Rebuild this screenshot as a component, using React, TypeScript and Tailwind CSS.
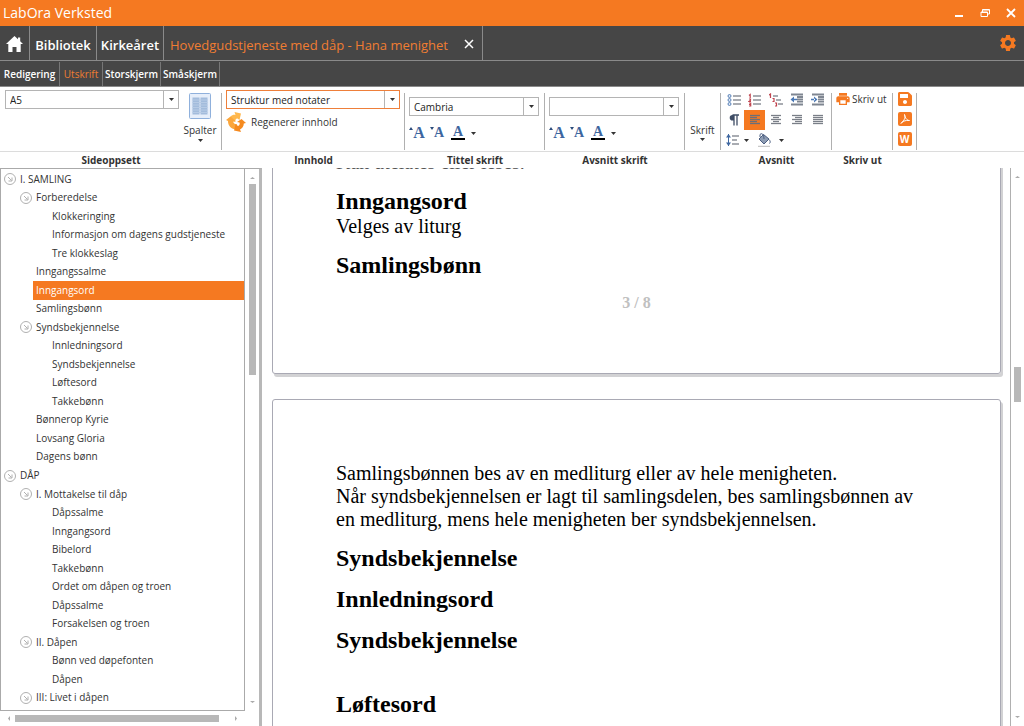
import { useState } from 'react';
import type { ReactNode } from 'react';
import { FaSave } from 'react-icons/fa';
import { MdPrint, MdSettings } from 'react-icons/md';

type TreeItem = { label: string; level: 0 | 1 | 2; open?: boolean };

const tree: TreeItem[] = [
    { label: 'I. SAMLING', level: 0, open: true },
    { label: 'Forberedelse', level: 1, open: true },
    { label: 'Klokkeringing', level: 2 },
    { label: 'Informasjon om dagens gudstjeneste', level: 2 },
    { label: 'Tre klokkeslag', level: 2 },
    { label: 'Inngangssalme', level: 1 },
    { label: 'Inngangsord', level: 1 },
    { label: 'Samlingsbønn', level: 1 },
    { label: 'Syndsbekjennelse', level: 1, open: true },
    { label: 'Innledningsord', level: 2 },
    { label: 'Syndsbekjennelse', level: 2 },
    { label: 'Løftesord', level: 2 },
    { label: 'Takkebønn', level: 2 },
    { label: 'Bønnerop Kyrie', level: 1 },
    { label: 'Lovsang Gloria', level: 1 },
    { label: 'Dagens bønn', level: 1 },
    { label: 'DÅP', level: 0, open: true },
    { label: 'I. Mottakelse til dåp', level: 1, open: true },
    { label: 'Dåpssalme', level: 2 },
    { label: 'Inngangsord', level: 2 },
    { label: 'Bibelord', level: 2 },
    { label: 'Takkebønn', level: 2 },
    { label: 'Ordet om dåpen og troen', level: 2 },
    { label: 'Dåpssalme', level: 2 },
    { label: 'Forsakelsen og troen', level: 2 },
    { label: 'II. Dåpen', level: 1, open: true },
    { label: 'Bønn ved døpefonten', level: 2 },
    { label: 'Dåpen', level: 2 },
    { label: 'III: Livet i dåpen', level: 1, open: true },
];

const indent = { 0: 'pl-[3px]', 1: 'pl-[19px]', 2: 'pl-[35px]' };

const ribbonColumns = 'grid grid-cols-[222px_183px_140px_140px_36px_111px_61px_24px_1fr]';

function Caret({ className = '' }: { className?: string }) {
    return (
        <svg viewBox="0 0 5 3" className={`h-[3px] w-[5px] shrink-0 ${className}`} aria-hidden="true">
            <path d="M0 0h5L2.500 3z" fill="#333" />
        </svg>
    );
}

function Combo({ label, options, active = false }: { label: string; options: string[]; active?: boolean }) {
    const border = active ? 'border-[#ee7f3a]' : 'border-[#b4b4b4]';
    return (
        <div className={`relative h-[19px] border bg-white ${border}`}>
            <select aria-label={label} className="block h-full w-full appearance-none pl-1 text-[10px] leading-4 text-[#222] outline-none">
                {options.map((o) => <option key={o}>{o}</option>)}
            </select>
            <span className="pointer-events-none absolute inset-y-0 right-0 flex w-[15px] items-center justify-center border-l border-[#b4b4b4]">
                <Caret />
            </span>
        </div>
    );
}

function Group({ children, className = '' }: { children?: ReactNode; className?: string }) {
    return <div className={`mt-1.5 mb-[3px] border-r border-[#b0b0b0] ${className}`}>{children}</div>;
}

function IconButton({ label, children, className = '' }: { label: string; children: ReactNode; className?: string }) {
    return (
        <button type="button" aria-label={label} title={label} className={`flex items-center justify-center ${className}`}>
            {children}
        </button>
    );
}

function FontTools({ name }: { name: string }) {
    return (
        <div className="mt-[7px] flex h-5 items-center font-['Liberation_Serif',serif] font-bold text-[#3d669f]">
            <IconButton label={`${name}: større skrift`} className="w-4 text-[16px] leading-4">
                <svg viewBox="0 0 4 4" className="mb-2 size-1 shrink-0"><path d="M0 3L2 0l2 3z" fill="#2b4c7c" /></svg>A
            </IconButton>
            <IconButton label={`${name}: mindre skrift`} className="ml-1 w-4 text-[14px] leading-4">
                <svg viewBox="0 0 4 4" className="mb-2 size-1 shrink-0"><path d="M0 0h4L2 3z" fill="#2b4c7c" /></svg>A
            </IconButton>
            <IconButton label={`${name}: skriftfarge`} className="ml-1.5 h-[14px] w-[14px] border-b-2 border-black text-[14px] leading-3">A</IconButton>
            <Caret className="ml-1.5" />
        </div>
    );
}

/* Icon of text lines, each row given as [x1, x2] */
function Lines({ rows, color = '#7a7f88', children }: { rows: [number, number][]; color?: string; children?: ReactNode }) {
    const dense = rows.length > 3;
    const step = dense ? 2 : 4;
    const start = dense ? 2.5 : 3;
    return (
        <svg viewBox="0 0 14 14" className="size-[14px]" aria-hidden="true">
            {rows.map(([a, b], i) => (
                <path key={i} d={`M${a} ${start + i * step}H${b}`} stroke={color} strokeWidth="1.3" />
            ))}
            {children}
        </svg>
    );
}

function IndentIcon({ flip = false }: { flip?: boolean }) {
    return (
        <svg viewBox="0 0 14 14" className="size-[14px]" aria-hidden="true">
            <path d="M1 1.500h12M7 4h6M7 6.300h6M7 8.600h6M1 11.500h12" stroke="#7f8691" strokeWidth="1.800" />
            {flip
                ? <path d="M4 3.500v6L.5 6.500zM4 5.700h3v1.600H4z" fill="#4a78b5" />
                : <path d="M3 3.500v6l3.500-3zM0 5.700h4v1.600H0z" fill="#4a78b5" />}
        </svg>
    );
}

function ParagraphTools() {
    return (
        <div className="grid grid-cols-[21px_21px_21px_21px_21px] grid-rows-[20px_20px_20px] pl-[2px]">
            <IconButton label="Punktliste">
                <Lines rows={[[6, 14], [6, 14], [6, 14]]}>
                    {[3, 7, 11].map((y) => <circle key={y} cx="2.500" cy={y} r="1.500" fill="#dbe7f5" stroke="#5b83b8" />)}
                </Lines>
            </IconButton>
            <IconButton label="Nummerert liste">
                <Lines rows={[[5, 13], [5, 13], [5, 13]]}>
                    <path d="M1 2.500L2.200 1.500V5M1 6h1.500v1.300L1 8.500h2M1 10h1.700v3H1M1 11.500h1.500" fill="none" stroke="#c0444f" strokeWidth="1.200" />
                </Lines>
            </IconButton>
            <IconButton label="Flernivåliste">
                <Lines rows={[[4, 9], [7, 12], [9, 14]]}>
                    <path d="M0 2l1.500-1v4M3.500 5.500h1.500v3H3.500M6 10h1.500v3H6" stroke="#c0444f" strokeWidth="1.200" fill="none" />
                </Lines>
            </IconButton>
            <IconButton label="Mindre innrykk"><IndentIcon flip /></IconButton>
            <IconButton label="Større innrykk"><IndentIcon /></IconButton>

            <IconButton label="Vis avsnittstegn">
                <svg viewBox="0 0 12 14" className="h-[14px] w-3">
                    <path d="M6 2H4.500a2.800 2.800 0 0 0 0 5.600H6z" fill="#3f4d66" />
                    <path d="M6 2v10.500M9 2v10.500M4.500 2H11" stroke="#3f4d66" strokeWidth="1.300" fill="none" />
                </svg>
            </IconButton>
            <IconButton label="Venstrejuster" className="bg-[#f57921]">
                <Lines color="#6b6f78" rows={[[2, 12], [2, 9], [2, 12], [2, 9], [2, 12]]} />
            </IconButton>
            <IconButton label="Midtstill"><Lines rows={[[2, 12], [4, 10], [2, 12], [4, 10], [2, 12]]} /></IconButton>
            <IconButton label="Høyrejuster"><Lines rows={[[2, 12], [5, 12], [2, 12], [5, 12], [2, 12]]} /></IconButton>
            <IconButton label="Blokkjuster"><Lines rows={[[2, 12], [2, 12], [2, 12], [2, 12], [2, 12]]} /></IconButton>

            <div className="col-span-5 flex items-center pl-[3px]">
                <IconButton label="Linjeavstand">
                    <Lines rows={[[6, 13], [6, 11], [6, 13]]}>
                        <path d="M2.500 1v12" stroke="#3f67a0" />
                        <path d="M0 4.500L2.500 1 5 4.500zM0 9.500L2.500 13 5 9.500z" fill="#3f67a0" />
                    </Lines>
                </IconButton>
                <Caret className="ml-1" />
                <IconButton label="Skyggelegging" className="ml-2">
                    <svg viewBox="0 0 14 14" className="size-[14px]">
                        <path d="M2 6L6.500 1.500 12 6 7 11z" fill="#8d9cb3" stroke="#4b5e80" />
                        <path d="M3 4V1.500C5-.5 7 1.500 7 6M12 6.500c1.500 1.500 1.500 3 .5 4" fill="none" stroke="#4b5e80" />
                        <path d="M1 13.300h12" stroke="#bbb" />
                    </svg>
                </IconButton>
                <Caret className="ml-2" />
            </div>
        </div>
    );
}

function Ribbon() {
    return (
        <section className="shrink-0 bg-white text-[10px] text-[#333]">
            <div className={`${ribbonColumns} h-[65px] border-b border-[#dcdcdc]`}>
                <Group className="flex">
                    <div className="-mt-[3px] w-[179px] pl-[5px]"><Combo label="Sidestørrelse" options={['A5', 'A4']} /></div>
                    <button type="button" className="flex flex-1 flex-col items-center">
                        <svg viewBox="0 0 22 26" className="h-[26px] w-[22px]">
                            <rect x=".5" y=".5" width="21" height="25" rx="1" fill="#e6eefa" stroke="#8fb0dc" />
                            <path d="M3.500 4.500h7v17h-7zM11.500 4.500h7v17h-7z" fill="#a3bcdc" />
                            <path d="M3.500 7h15M3.500 9.500h15M3.500 12h15M3.500 14.500h15M3.500 17h15M3.500 19.500h15" stroke="#b7cbe5" />
                        </svg>
                        <span className="mt-1 leading-[15px]">Spalter</span>
                        <Caret className="mt-px" />
                    </button>
                </Group>
                <Group>
                    <div className="-mt-[3px] pr-1 pl-1"><Combo active label="Innhold" options={['Struktur med notater', 'Struktur']} /></div>
                    <button type="button" className="ml-1 flex items-center gap-[5px] pt-[3px]">
                        <svg viewBox="0 0 20 20" className="size-5">
                            <path d="M4.500 4.500C6 3 8 2.500 9.500 3L8.500 0 15 1.500 13.500 8l-2-1.500C9.500 6.500 9 8.500 9.500 10L5 9z" fill="#ffb84d" />
                            <path d="M0 8l4.500-3.500L9.500 9l-2.500.5c.5 2 2.500 3 4 2.500l-1 5C5.500 17.500 2 14 2 9z" fill="#fba63c" />
                            <path d="M15.500 7l4.500 4-2.200.5c0 3-1.800 5-3.800 6L15 20l-7-1.500L9.500 12l2.500 2c1.500-.5 2-2 1.500-3.500l-2.500-.5z" fill="#f58a1f" />
                        </svg>
                        Regenerer innhold
                    </button>
                </Group>
                <Group className="pt-1 pr-[5px] pl-1">
                    <Combo label="Tittel skrifttype" options={['Cambria', 'Calibri']} />
                    <FontTools name="Tittel" />
                </Group>
                <Group className="pt-1 pr-[5px] pl-1">
                    <Combo label="Avsnitt skrifttype" options={['', 'Cambria']} />
                    <FontTools name="Avsnitt" />
                </Group>
                <Group className="flex justify-center">
                    <button type="button" className="flex flex-col items-center pt-[30px]">
                        Skrift<Caret />
                    </button>
                </Group>
                <Group><div className="-mt-[3px]"><ParagraphTools /></div></Group>
                <Group>
                    <button type="button" className="-mt-0.5 flex items-center gap-px pl-[3px] leading-4">
                        <MdPrint className="size-4 text-[#f57921]" />Skriv ut
                    </button>
                </Group>
                <Group className="flex flex-col items-center">
                    <div className="-mt-px flex flex-col gap-1.5">
                        <IconButton label="Lagre" className="size-[14px]"><FaSave className="size-4 shrink-0 text-[#f57921]" /></IconButton>
                        <IconButton label="Lagre som PDF" className="size-[14px] rounded-xs bg-[#f57921]">
                            <svg viewBox="0 0 14 14" className="size-[14px]" fill="none" stroke="#fff">
                                <path d="M6.500 2.500c1 3 .5 5-3.500 9 1-2 4-3.500 8.500-3C9 8.500 7 6 6.500 2.500z" />
                            </svg>
                        </IconButton>
                        <IconButton label="Lagre som Word" className="size-[14px] rounded-xs bg-[#f57921] text-[10px] leading-3 font-bold text-white">W</IconButton>
                    </div>
                </Group>
            </div>
            <div className={`${ribbonColumns} h-4 text-center leading-4 font-bold`}>
                <span>Sideoppsett</span>
                <span>Innhold</span>
                <span>Tittel skrift</span>
                <span>Avsnitt skrift</span>
                <span />
                <span>Avsnitt</span>
                <span>Skriv ut</span>
            </div>
        </section>
    );
}

function ScrollArrow({ d }: { d: string }) {
    return <svg viewBox="0 0 5 5" className="size-[5px]" aria-hidden="true"><path d={d} fill="#aaa" /></svg>;
}

function Sidebar() {
    const [selected, setSelected] = useState(6);
    return (
        <aside className="grid w-[262px] shrink-0 grid-cols-[1fr_14px] grid-rows-[1fr_15px] border-t border-r-[3px] border-t-[#aaa] border-r-[#b8b8b8]">
            <ul className="flex min-h-0 flex-col overflow-hidden border-r border-b border-l border-[#aaa] pt-px pb-[3px] text-[10px] text-[#333]">
                {tree.map((item, i) => (
                    <li key={i} className={`flex min-h-0 flex-1 items-center ${indent[item.level]}`}>
                        <span className="w-3 shrink-0">
                            {item.open && (
                                <svg viewBox="0 0 12 12" className="size-3" fill="none" stroke="#b0b0b0">
                                    <circle cx="6" cy="6" r="5.500" />
                                    <path d="M4 4l3.500 3.500M8 4.500V8H4.500" />
                                </svg>
                            )}
                        </span>
                        <button
                            type="button"
                            onClick={() => setSelected(i)}
                            className={`ml-px h-full flex-1 pl-[3px] text-left whitespace-nowrap ${i === selected ? 'bg-[#f57921] text-white' : ''}`}
                        >
                            {item.label}
                        </button>
                    </li>
                ))}
            </ul>
            <div className="flex flex-col items-center pt-1.5 pb-1.5">
                <ScrollArrow d="M0 4l2.500-2L5 4z" />
                <div className="mt-1 h-[191px] w-[7px] bg-[#b8b8b8]" />
                <div className="mt-auto"><ScrollArrow d="M0 1l2.500 2L5 1z" /></div>
            </div>
            <div className="flex items-center pr-1.5 pl-1.5">
                <ScrollArrow d="M4 0L2 2.500 4 5z" />
                <div className="ml-1 h-[7px] w-[204px] bg-[#b8b8b8]" />
                <div className="ml-auto"><ScrollArrow d="M1 0l2 2.500L1 5z" /></div>
            </div>
        </aside>
    );
}

function Heading({ children, className = '' }: { children: ReactNode; className?: string }) {
    return <h2 className={`text-[24px] leading-7 font-bold ${className}`}>{children}</h2>;
}

function Preview() {
    const sheet = 'rounded-[3px] border border-[#a9a9b4] px-[63px] shadow-[2px_3px_0_#d2d2d4]';
    return (
        <main className="min-w-0 flex-1 overflow-hidden bg-white pr-[9px] pl-[10px] font-['Liberation_Serif',serif] text-[20px] leading-[23px] text-black">
            <article className={`-mt-[18px] h-[224px] ${sheet}`}>
                <p className="text-[#555]">Kan utelates eller leses.</p>
                <Heading className="mt-[13px]">Inngangsord</Heading>
                <p>Velges av liturg</p>
                <Heading className="mt-[13px]">Samlingsbønn</Heading>
                <p className="mt-3 text-center text-[16px] font-bold text-[#c0c0c0]">3 / 8</p>
            </article>
            <article className={`mt-[25px] h-[500px] pt-[62px] ${sheet}`}>
                <p>
                    Samlingsbønnen bes av en medliturg eller av hele menigheten.<br />
                    Når syndsbekjennelsen er lagt til samlingsdelen, bes samlingsbønnen av<br />
                    en medliturg, mens hele menigheten ber syndsbekjennelsen.
                </p>
                <Heading className="mt-[13px]">Syndsbekjennelse</Heading>
                <Heading className="mt-[13px]">Innledningsord</Heading>
                <Heading className="mt-[13px]">Syndsbekjennelse</Heading>
                <Heading className="mt-9">Løftesord</Heading>
            </article>
        </main>
    );
}

export default function App() {
    return (
        <div className="flex h-screen flex-col overflow-hidden bg-white font-['Open_Sans',sans-serif]">
            <header className="flex h-[26px] shrink-0 items-center bg-[#f57921] text-white">
                <h1 className="flex-1 pb-0.5 pl-[3px] text-[14px]">LabOra Verksted</h1>
                <IconButton label="Minimer" className="w-[26px]">
                    <svg viewBox="0 0 10 10" className="size-[10px]"><path d="M1 8h8" stroke="#fff" strokeWidth="2" /></svg>
                </IconButton>
                <IconButton label="Gjenopprett" className="w-[26px]">
                    <svg viewBox="0 0 10 10" className="size-[10px]" fill="none" stroke="#fff">
                        <path d="M1 4h6.500v4.500H1zM1 4.500h6.500M2.500 4V1.500h7V6H7.500M2.500 2h7" />
                    </svg>
                </IconButton>
                <IconButton label="Lukk" className="w-[26px]">
                    <svg viewBox="0 0 10 10" className="size-[10px]"><path d="M1 1l8 8M9 1L1 9" stroke="#fff" strokeWidth="1.800" /></svg>
                </IconButton>
            </header>

            <nav className="flex h-[35px] shrink-0 items-stretch border-b border-[#8a8a8a] bg-[#464646] text-[13px] text-white">
                <a href="#hjem" aria-label="Hjem" className="flex w-[30px] items-center justify-center border-r border-[#8a8a8a] pt-0.5">
                    <svg viewBox="0 0 17 16" className="h-4 w-[17px]" fill="#fff">
                        <path d="M8.500 0l3.500 3.200V1.500h2.200v3.700L17 8h-2.300v8h-4.200v-5h-4v5H2.300V8H0z" />
                    </svg>
                </a>
                <a href="#bibliotek" className="flex w-[67px] items-center justify-center border-r border-[#8a8a8a] pt-1.5 font-semibold">Bibliotek</a>
                <a href="#kirkearet" className="flex w-[67px] items-center justify-center border-r border-[#8a8a8a] pt-1.5 font-semibold">Kirkeåret</a>
                <div className="flex items-center border-r border-[#8a8a8a] pr-2 pl-1.5">
                    <a href="#dokument" className="pt-1.5 whitespace-nowrap text-[#f07d32]">Hovedgudstjeneste med dåp - Hana menighet</a>
                    <IconButton label="Lukk fane" className="mt-0.5 ml-4">
                        <svg viewBox="0 0 10 10" className="size-[10px]"><path d="M1 1l8 8M9 1L1 9" stroke="#fff" strokeWidth="1.500" /></svg>
                    </IconButton>
                </div>
                <IconButton label="Innstillinger" className="mr-1.5 ml-auto"><MdSettings className="size-5 text-[#f57921]" /></IconButton>
            </nav>

            <nav className="flex h-[26px] shrink-0 items-stretch border-b border-[#8a8a8a] bg-[#464646] pt-px text-[10px] font-semibold text-white">
                <a href="#redigering" className="flex w-[60px] items-center justify-center border-r border-[#777]">Redigering</a>
                <a href="#utskrift" className="flex w-[43px] items-center justify-center border-r border-[#777] font-normal text-[#f07d32]">Utskrift</a>
                <a href="#storskjerm" className="flex w-[58px] items-center justify-center border-r border-[#777]">Storskjerm</a>
                <a href="#smaskjerm" className="flex w-[59px] items-center justify-center border-r border-[#777]">Småskjerm</a>
            </nav>

            <Ribbon />

            <div className="flex min-h-0 flex-1">
                <Sidebar />
                <Preview />
                <div className="flex w-[14px] shrink-0 flex-col items-center border-l border-[#b0b0b0] pt-1.5 pb-1.5">
                    <ScrollArrow d="M0 4l2.500-2L5 4z" />
                    <div className="mt-[188px] h-[35px] w-[7px] bg-[#b8b8b8]" />
                    <div className="mt-auto"><ScrollArrow d="M0 1l2.500 2L5 1z" /></div>
                </div>
            </div>
        </div>
    );
}
